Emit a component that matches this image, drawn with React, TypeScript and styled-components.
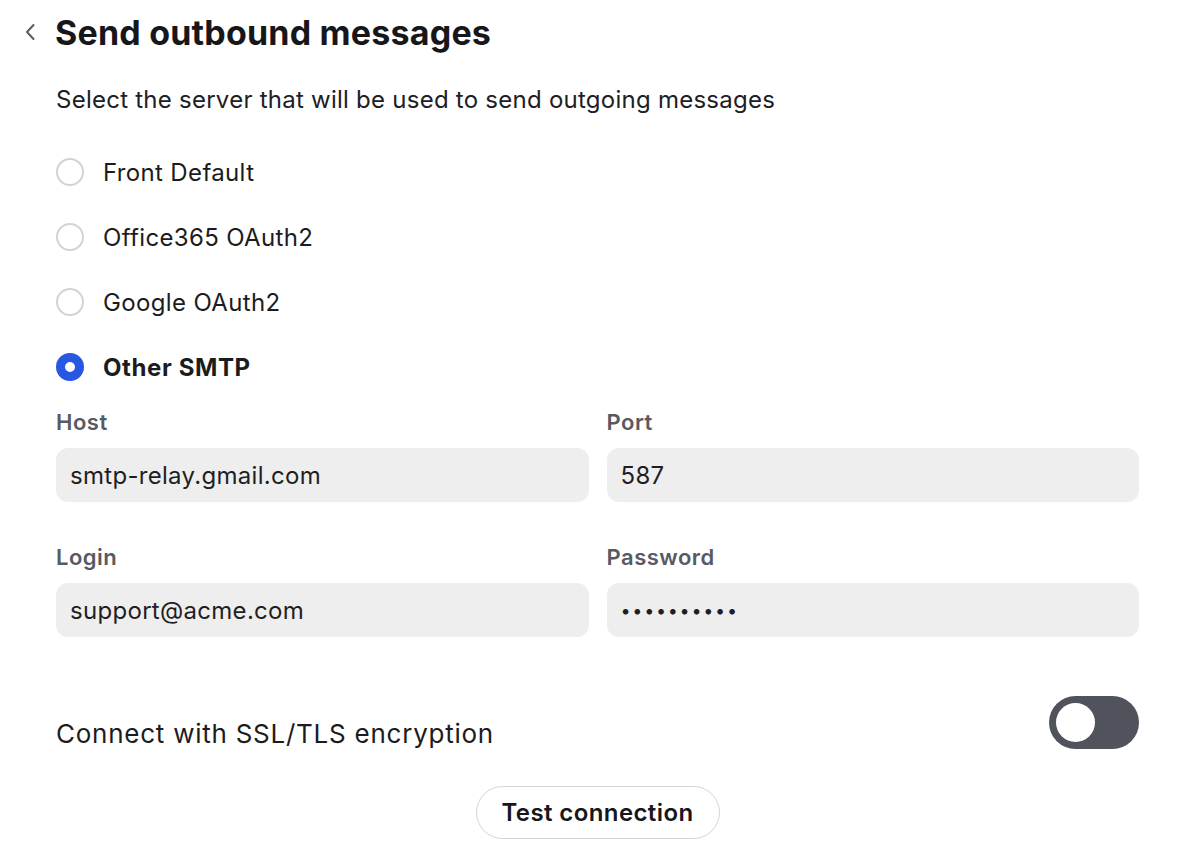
import React from "react";
import styled, { createGlobalStyle } from "styled-components";

const Global = createGlobalStyle`
  html, body { margin: 0; padding: 0; background: #ffffff; }
  body { font-family: Inter, "Noto Sans", "Liberation Sans", sans-serif; color: #1b1b1f; }
  * { box-sizing: border-box; }
`;

const Page = styled.div`
  width: 1188px;
  height: 862px;
  padding: 10px 49px 0 22px;
  display: flex;
  flex-direction: column;
`;

const Header = styled.div`
  display: flex;
  align-items: center;
  height: 44px;
  gap: 18px;
`;

const BackButton = styled.button`
  border: none;
  background: none;
  padding: 0;
  width: 15px;
  height: 24px;
  display: flex;
  align-items: center;
  justify-content: center;
  cursor: pointer;
`;

const Title = styled.h1`
  margin: 0;
  font-size: 34px;
  font-weight: 700;
  letter-spacing: 0.2px;
  color: #17171b;
`;

const Body = styled.div`
  padding-left: 34px;
  display: flex;
  flex-direction: column;
`;

const Subtitle = styled.p`
  margin: 32px 0 0;
  font-size: 24px;
  letter-spacing: 0.25px;
  line-height: 28px;
  color: #202024;
`;

const RadioList = styled.div`
  display: flex;
  flex-direction: column;
  margin-top: 44px;
  gap: 37px;
`;

const RadioRow = styled.label`
  display: flex;
  align-items: center;
  gap: 19px;
  height: 28px;
  font-size: 24px;
  cursor: pointer;
`;

const RadioCircle = styled.span<{ $checked?: boolean }>`
  width: 28px;
  height: 28px;
  border-radius: 50%;
  flex: none;
  border: ${(p) => (p.$checked ? "9px solid #2857e3" : "2px solid #d3d3d6")};
  background: #fff;
`;

const RadioLabel = styled.span<{ $checked?: boolean }>`
  font-weight: ${(p) => (p.$checked ? 700 : 400)};
  letter-spacing: ${(p) => (p.$checked ? "0.6px" : "0.35px")};
  color: #1c1c20;
`;

const Grid = styled.div`
  display: grid;
  grid-template-columns: 1fr 1fr;
  column-gap: 18px;
  row-gap: 41px;
  margin-top: 27px;
`;

const Field = styled.div`
  display: flex;
  flex-direction: column;
  gap: 12px;
`;

const FieldLabel = styled.div`
  font-size: 22px;
  font-weight: 600;
  letter-spacing: 0.5px;
  line-height: 28px;
  color: #575a63;
`;

const Input = styled.div<{ $secret?: boolean }>`
  height: 54px;
  border-radius: 12px;
  background: #eeeeef;
  padding: 0 14px;
  display: flex;
  align-items: center;
  font-size: ${(p) => (p.$secret ? "18px" : "24px")};
  color: #1f1f23;
  letter-spacing: ${(p) => (p.$secret ? "1.7px" : "0.3px")};
`;

const ToggleRow = styled.div`
  display: flex;
  align-items: flex-end;
  justify-content: space-between;
  margin-top: 59px;
`;

const ToggleText = styled.span`
  font-size: 26px;
  letter-spacing: 0.75px;
  line-height: 30px;
  color: #1c1c20;
`;

const Toggle = styled.span`
  width: 90px;
  height: 53px;
  border-radius: 27px;
  background: #50535c;
  padding: 7px;
  display: flex;
  align-items: center;
`;

const Knob = styled.span`
  width: 39px;
  height: 39px;
  border-radius: 50%;
  background: #fff;
`;

const ButtonRow = styled.div`
  display: flex;
  justify-content: center;
  margin-top: 37px;
`;

const PillButton = styled.button`
  height: 53px;
  width: 244px;
  border-radius: 27px;
  border: 1px solid #d4d4d9;
  background: #fff;
  font-family: inherit;
  font-size: 24px;
  font-weight: 600;
  letter-spacing: 0.4px;
  color: #17171b;
  cursor: pointer;
`;

const options = ["Front Default", "Office365 OAuth2", "Google OAuth2", "Other SMTP"];

export default function App() {
  return (
    <>
      <Global />
      <Page>
        <Header>
          <BackButton aria-label="Back">
            <svg width="12" height="18" viewBox="0 0 12 18" fill="none">
              <path d="M9.5 2 L3 9 L9.5 16" stroke="#5a5c63" strokeWidth="2" strokeLinecap="round" strokeLinejoin="round" />
            </svg>
          </BackButton>
          <Title>Send outbound messages</Title>
        </Header>
        <Body>
          <Subtitle>Select the server that will be used to send outgoing messages</Subtitle>
          <RadioList>
            {options.map((o) => {
              const checked = o === "Other SMTP";
              return (
                <RadioRow key={o}>
                  <RadioCircle $checked={checked} />
                  <RadioLabel $checked={checked}>{o}</RadioLabel>
                </RadioRow>
              );
            })}
          </RadioList>
          <Grid>
            <Field>
              <FieldLabel>Host</FieldLabel>
              <Input>smtp-relay.gmail.com</Input>
            </Field>
            <Field>
              <FieldLabel>Port</FieldLabel>
              <Input>587</Input>
            </Field>
            <Field>
              <FieldLabel>Login</FieldLabel>
              <Input>support@acme.com</Input>
            </Field>
            <Field>
              <FieldLabel>Password</FieldLabel>
              <Input $secret>••••••••••</Input>
            </Field>
          </Grid>
          <ToggleRow>
            <ToggleText>Connect with SSL/TLS encryption</ToggleText>
            <Toggle>
              <Knob />
            </Toggle>
          </ToggleRow>
          <ButtonRow>
            <PillButton>Test connection</PillButton>
          </ButtonRow>
        </Body>
      </Page>
    </>
  );
}
